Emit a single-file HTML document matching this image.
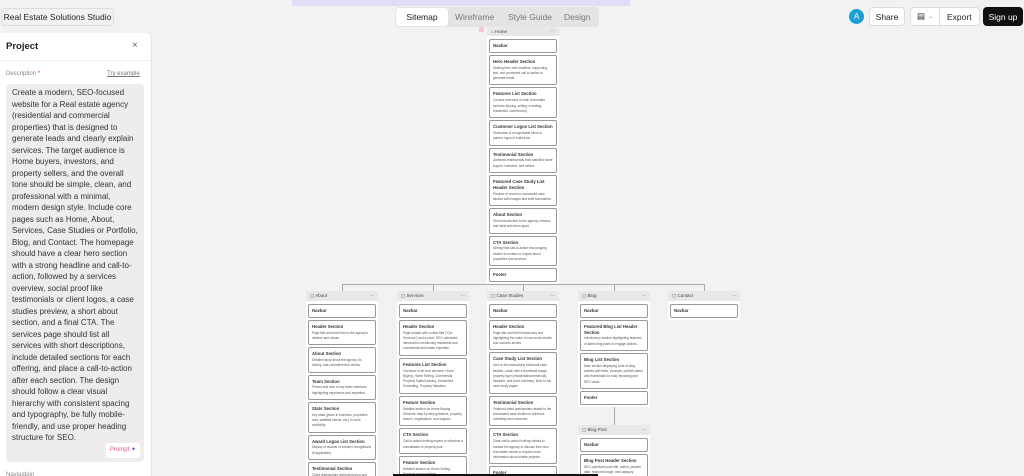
<!DOCTYPE html>
<html><head><meta charset="utf-8"><style>
*{box-sizing:border-box;margin:0;padding:0}
html,body{width:1024px;height:476px;overflow:hidden}
body{background:#f3f1f1;font-family:"Liberation Sans",sans-serif;color:#222;position:relative}
.abs{position:absolute}
.btn{position:absolute;background:#fff;border:1px solid #ddd;border-radius:4px;font-size:8.5px;display:flex;align-items:center;justify-content:center;color:#222}
.col{position:absolute;width:72px;background:#fff}
.hd{height:10px;background:#e9e7e7;font-size:4.5px;display:flex;align-items:center;padding:0 4px;color:#444;justify-content:space-between}
.cards{display:flex;flex-direction:column;gap:2px;padding:3px 2px 2px}
.c{border:1px solid #999;border-radius:2px;padding:3px 3px;background:#fff}
.c b{display:block;font-size:4.3px;line-height:5.8px;font-weight:bold;color:#333}
.c p{font-size:3.2px;line-height:5.3px;color:#555;margin-top:1px}
.ln{position:absolute;background:#aaa}
</style></head><body>
<div class="abs" style="left:292px;top:0;width:338px;height:6px;background:#e2ddf6"></div>
<div class="btn" style="left:1px;top:8px;width:113px;height:18px;background:#f3f1f1">Real Estate Solutions Studio</div>

<div class="abs" style="left:395px;top:7px;width:204px;height:20px;background:#e6e3e3;border-radius:4px"></div>
<div class="abs" style="left:396px;top:8px;width:52px;height:18px;background:#fff;border-radius:3px;font-size:8.5px;display:flex;align-items:center;justify-content:center">Sitemap</div>
<div class="abs" style="left:455px;top:12px;font-size:8.5px;color:#777">Wireframe</div>
<div class="abs" style="left:508px;top:12px;font-size:8.5px;color:#777">Style Guide</div>
<div class="abs" style="left:564px;top:12px;font-size:8.5px;color:#777">Design</div>

<div class="abs" style="left:849px;top:9px;width:15px;height:15px;border-radius:50%;background:#1d9fd8;color:#fff;font-size:8px;display:flex;align-items:center;justify-content:center">A</div>
<div class="btn" style="left:869px;top:7px;width:36px;height:19px">Share</div>
<div class="btn" style="left:910px;top:7px;width:70px;height:19px;justify-content:flex-start;padding-left:6px">▤ <span style="font-size:6px;color:#888;margin-left:3px">⌄</span><span style="position:absolute;left:28px;top:0;bottom:0;border-left:1px solid #ddd"></span><span style="position:absolute;left:36px">Export</span></div>
<div class="btn" style="left:983px;top:7px;width:40px;height:19px;background:#111;color:#fff;border-color:#111">Sign up</div>

<div class="abs" style="left:0;top:33px;width:152px;height:443px;background:#fff;border-radius:0 6px 0 0;border-right:1px solid #e6e4e4">
<div style="position:absolute;left:6px;top:8px;font-size:9.5px;font-weight:bold">Project</div>
<div style="position:absolute;left:132px;top:7px;font-size:10px;color:#666">×</div>
<div style="position:absolute;left:0;top:27px;width:152px;border-top:1px solid #eee"></div>
<div style="position:absolute;left:6px;top:38px;font-size:6px;color:#888">Description <span style="color:#d33">*</span></div>
<div style="position:absolute;left:107px;top:38px;font-size:6px;color:#777;text-decoration:underline">Try example</div>
<div style="position:absolute;left:6px;top:51px;width:138px;height:378px;background:#efecec;border-radius:4px;padding:3px 6px;font-size:8px;line-height:11.5px;color:#333">Create a modern, SEO-focused website for a Real estate agency (residential and commercial properties) that is designed to generate leads and clearly explain services. The target audience is Home buyers, investors, and property sellers, and the overall tone should be simple, clean, and professional with a minimal, modern design style. Include core pages such as Home, About, Services, Case Studies or Portfolio, Blog, and Contact. The homepage should have a clear hero section with a strong headline and call-to-action, followed by a services overview, social proof like testimonials or client logos, a case studies preview, a short about section, and a final CTA. The services page should list all services with short descriptions, include detailed sections for each offering, and place a call-to-action after each section. The design should follow a clear visual hierarchy with consistent spacing and typography, be fully mobile-friendly, and use proper heading structure for SEO.
<div style="position:absolute;right:4px;bottom:4px;background:#fff;border-radius:3px;padding:2px 4px;font-size:6px;color:#e0508a">Prompt <span style="color:#6a4cf0">✦</span></div></div>
<div style="position:absolute;left:6px;top:439px;font-size:6px;color:#888">Navigation</div>
</div>

<div class="ln" style="left:523px;top:271px;width:1px;height:14px"></div>
<div class="ln" style="left:342px;top:284px;width:362px;height:1px"></div>
<div class="ln" style="left:342px;top:284px;width:1px;height:8px"></div>
<div class="ln" style="left:433px;top:284px;width:1px;height:8px"></div>
<div class="ln" style="left:523px;top:284px;width:1px;height:8px"></div>
<div class="ln" style="left:614px;top:284px;width:1px;height:8px"></div>
<div class="ln" style="left:704px;top:284px;width:1px;height:8px"></div>
<div class="ln" style="left:614px;top:406px;width:1px;height:20px"></div>
<div class="abs" style="left:479px;top:27px;width:5px;height:5px;background:#f6c6d2"></div>

<div class="col" style="left:487px;top:26px">
<div class="hd"><span>⌂ Home</span><span>⋯</span></div>
<div class="cards">
<div class="c"><b>Navbar</b></div>
<div class="c"><b>Hero Header Section</b><p>Striking hero with headline, supporting text, and prominent call-to-action to generate leads.</p></div>
<div class="c"><b>Features List Section</b><p>Concise overview of main real estate services (buying, selling, investing, residential, commercial).</p></div>
<div class="c"><b>Customer Logos List Section</b><p>Showcase of recognizable client or partner logos to build trust.</p></div>
<div class="c"><b>Testimonial Section</b><p>Authentic testimonials from satisfied home buyers, investors, and sellers.</p></div>
<div class="c"><b>Featured Case Study List Header Section</b><p>Preview of recent or successful case studies with images and brief summaries.</p></div>
<div class="c"><b>About Section</b><p>Short introduction to the agency, mission, and what sets them apart.</p></div>
<div class="c"><b>CTA Section</b><p>Strong final call-to-action encouraging visitors to contact or inquire about properties and services.</p></div>
<div class="c"><b>Footer</b></div>
</div></div>

<div class="col" style="left:306px;top:291px">
<div class="hd"><span>▢ About</span><span>⋯</span></div>
<div class="cards">
<div class="c"><b>Navbar</b></div>
<div class="c"><b>Header Section</b><p>Page title and brief intro to the agency's mission and values.</p></div>
<div class="c"><b>About Section</b><p>Detailed story about the agency, its history, and commitment to clients.</p></div>
<div class="c"><b>Team Section</b><p>Photos and bios of key team members highlighting experience and expertise.</p></div>
<div class="c"><b>Stats Section</b><p>Key stats (years in business, properties sold, satisfied clients, etc.) to build credibility.</p></div>
<div class="c"><b>Award Logos List Section</b><p>Display of awards or industry recognitions (if applicable).</p></div>
<div class="c"><b>Testimonial Section</b><p>Client testimonials reinforcing trust and satisfaction.</p></div>
</div></div>

<div class="col" style="left:397px;top:291px">
<div class="hd"><span>▢ Services</span><span>⋯</span></div>
<div class="cards">
<div class="c"><b>Navbar</b></div>
<div class="c"><b>Header Section</b><p>Page header with a clear title ("Our Services") and a short, SEO-optimized introduction mentioning residential and commercial real estate expertise.</p></div>
<div class="c"><b>Features List Section</b><p>Overview of all core services: Home Buying, Home Selling, Commercial Property Sales/Leasing, Investment Consulting, Property Valuation.</p></div>
<div class="c"><b>Feature Section</b><p>Detailed section on Home Buying Services: step-by-step guidance, property search, negotiations, and support.</p></div>
<div class="c"><b>CTA Section</b><p>Call-to-action inviting buyers to schedule a consultation or property tour.</p></div>
<div class="c"><b>Feature Section</b><p>Detailed section on Home Selling Services and marketing.</p></div>
</div></div>

<div class="col" style="left:487px;top:291px">
<div class="hd"><span>▢ Case Studies</span><span>⋯</span></div>
<div class="cards">
<div class="c"><b>Navbar</b></div>
<div class="c"><b>Header Section</b><p>Page title and brief introductory text highlighting the value of real-world results and success stories.</p></div>
<div class="c"><b>Case Study List Section</b><p>Grid or list showcasing individual case studies—each with a thumbnail image, property type (residential/commercial), headline, and short summary; links to full case study pages.</p></div>
<div class="c"><b>Testimonial Section</b><p>Featured client testimonials related to the showcased case studies to reinforce credibility and outcomes.</p></div>
<div class="c"><b>CTA Section</b><p>Clear call-to-action inviting visitors to contact the agency to discuss their own real estate needs or request more information about similar projects.</p></div>
<div class="c"><b>Footer</b></div>
</div></div>

<div class="col" style="left:578px;top:291px">
<div class="hd"><span>▢ Blog</span><span>⋯</span></div>
<div class="cards">
<div class="c"><b>Navbar</b></div>
<div class="c"><b>Featured Blog List Header Section</b><p>Introductory section highlighting featured or latest blog posts to engage visitors.</p></div>
<div class="c"><b>Blog List Section</b><p>Main section displaying a list of blog articles with titles, excerpts, publish dates, and thumbnails for easy browsing and SEO value.</p></div>
<div class="c"><b>Footer</b></div>
</div></div>

<div class="col" style="left:578px;top:425px">
<div class="hd"><span>▢ Blog Post</span><span>⋯</span></div>
<div class="cards">
<div class="c"><b>Navbar</b></div>
<div class="c"><b>Blog Post Header Section</b><p>SEO-optimized post title, author, publish date, featured image, and category.</p></div>
</div></div>

<div class="col" style="left:668px;top:291px">
<div class="hd"><span>▢ Contact</span><span>⋯</span></div>
<div class="cards">
<div class="c"><b>Navbar</b></div>
</div></div>

<div class="abs" style="left:393px;top:474px;width:205px;height:2px;background:#111"></div>
</body></html>
